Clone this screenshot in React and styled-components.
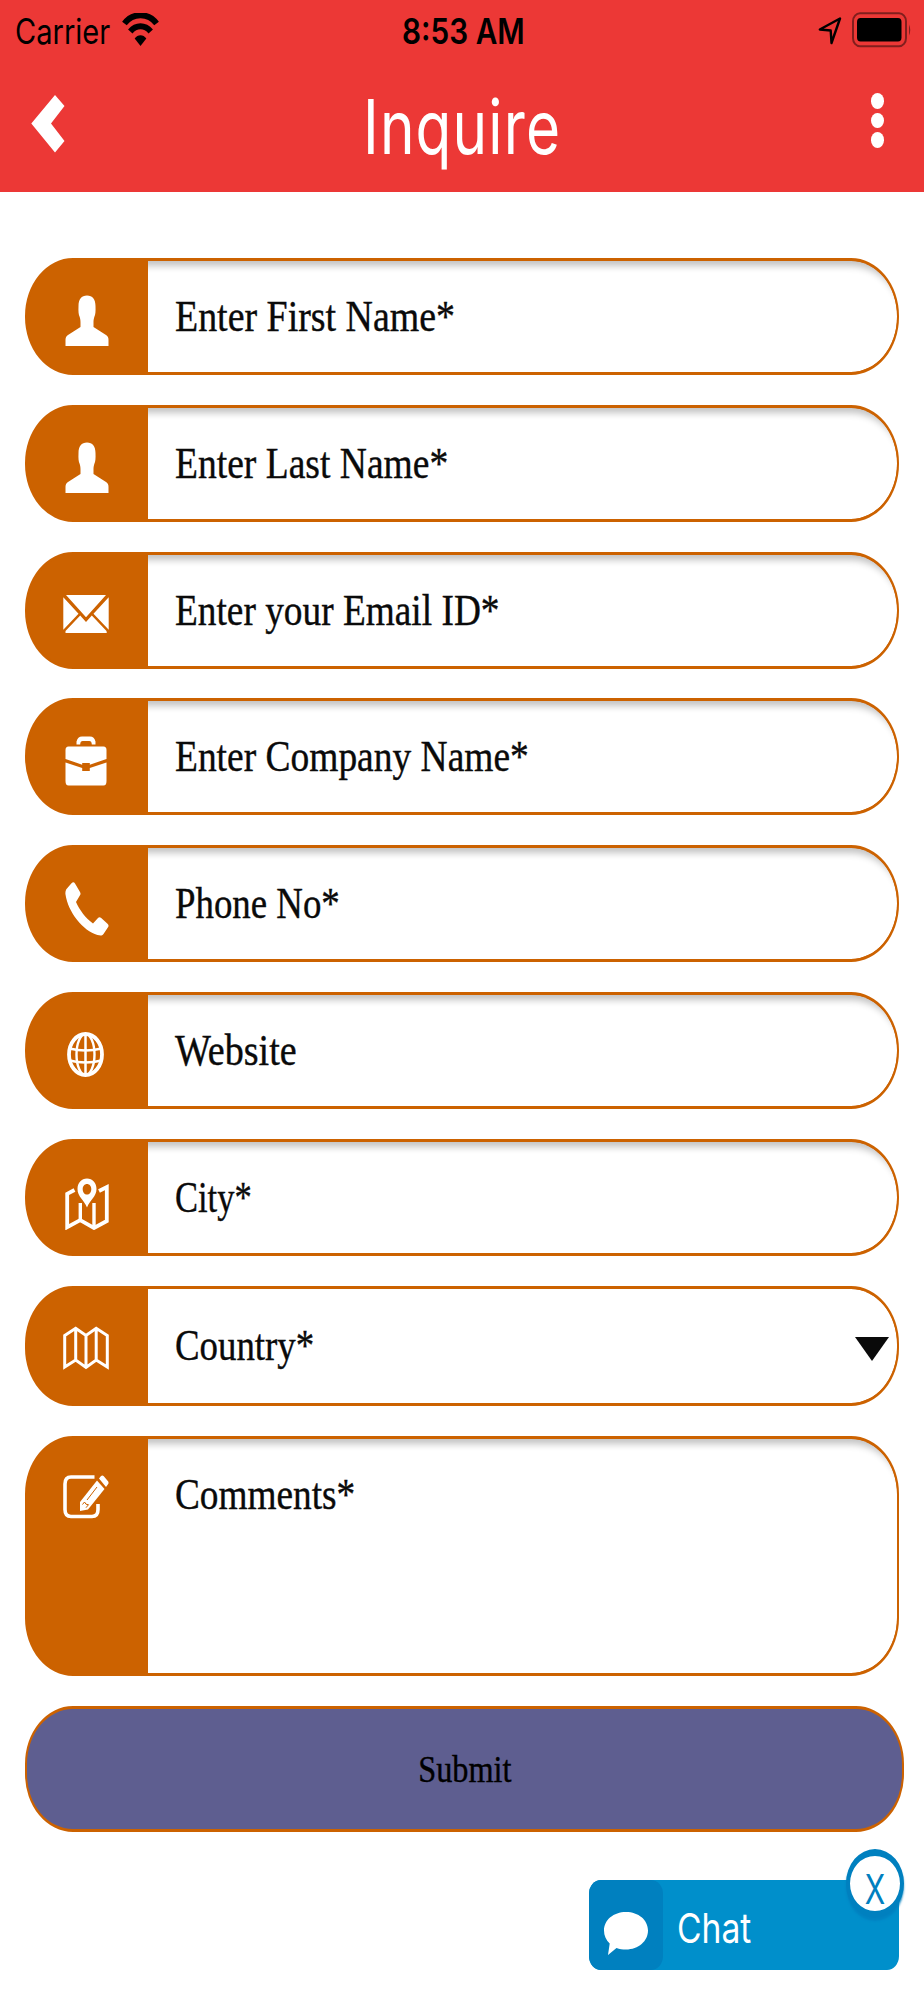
import React from 'react';
import styled, { createGlobalStyle, css } from 'styled-components';

const GlobalStyle = createGlobalStyle`
  * {
    box-sizing: border-box;
  }

  body {
    margin: 0;
    background: #fff;
  }
`;

const UserIcon = () => (
  <svg width="44" height="52" viewBox="0 0 44 52" fill="#fff">
    <path d="M22 .5c5.500 0 8.500 4 8.500 10.500.2 5.500 0 8.500-1.200 11-.6 2-.8 3.500-.8 5.500V32L41 40c2 1.500 2.500 2.500 2.500 5v6h-43v-6c0-2.500.5-3.500 2.500-5l12.500-8v-4.500c0-2-.2-3.500-.8-5.500-1.200-2.500-1.400-5.500-1.200-11C13.500 4.500 16.500.5 22 .5z" />
  </svg>
);

const MailIcon = () => (
  <svg width="46" height="38" viewBox="0 0 46 38" fill="#fff">
    <path d="M3 0h40L27.500 17.200 23 22.200l-4.500-5zM.3 2.300 15.500 18.800.3 34.800zM45.700 2.300v32.500L30.500 18.800zM17.200 20.500 23 27l5.800-6.500L43.500 36l.3 2H2.500v-2z" />
  </svg>
);

const BriefcaseIcon = () => (
  <svg width="42" height="50" viewBox="0 0 42 50" fill="#fff">
    <path d="M11.500 8.500V5.500C12.500 2.200 14 .5 17 .5h8c3 0 4.500 1.700 5.500 5v3h-3.700c0-2.500-1-3.500-2.500-3.500h-6.600c-1.500 0-2.500 1-2.500 3.500z" />
    <path d="M3.500 10.500h35c2 0 3 1.500 3 3.500v9L24.800 28.700V27h-7.600v1.700L.5 23v-9c0-2 1-3.500 3-3.500zM.5 26.500 17.200 32v3h7.600v-3l16.700-5.500V45c0 3-1 4.500-3 4.500h-35c-2 0-3-1.500-3-4.500z" />
  </svg>
);

const PhoneIcon = () => (
  <svg width="44" height="54" viewBox="0 0 44 54" fill="#fff">
    <path d="M6.500 1.200c1.500-1.500 2.500-1.200 3.500.3l5 8.500c.8 1.500.7 2.500-.3 3.800L11 20c3.500 8 9.500 16 17 21.500l5-5.500c1-1 2-1 3.200 0l6.300 5.800c1.200 1.200 1.400 2.200.5 3.500L38.500 52c-1.500 1.800-3 1.700-6 1C18 49 3 30 .5 12.500c-.3-2 0-4 .8-5.300z" />
  </svg>
);

const GlobeIcon = () => (
  <svg width="37" height="45" viewBox="0 0 37 45" fill="none" stroke="#fff">
    <ellipse cx="18.500" cy="22.500" rx="16.500" ry="20.500" strokeWidth="3.800" />
    <ellipse cx="18.500" cy="22.500" rx="9" ry="20.500" strokeWidth="2.400" />
    <path d="M18.500 2v41M2.500 16.500q16 4 32 0M2.500 28.500q16 4 32 0" strokeWidth="2.500" />
  </svg>
);

const MapPinIcon = () => (
  <svg width="44" height="52" viewBox="0 0 44 52" fill="none" stroke="#fff" strokeWidth="3.800">
    <path d="M9.500 12 2.200 15.800v33.400l13-7L29 50l12.800-7V9L34 13" />
    <path d="M15.300 25v17M29 25v24" strokeWidth="3.400" />
    <path
      d="M22 .5c5.500 0 9.500 4.500 9.500 10.500 0 7.500-6.500 11-9.500 18.500C19 22 12.500 18.500 12.500 11 12.500 5 16.500.5 22 .5zm0 5.500c-2.500 0-4.300 2.200-4.300 5.200s1.800 5.300 4.300 5.300 4.300-2.300 4.300-5.300S24.500 6 22 6z"
      fill="#fff"
      stroke="none"
      fillRule="evenodd"
    />
  </svg>
);

const MapIcon = () => (
  <svg width="46" height="44" viewBox="0 0 46 44" fill="none" stroke="#fff" strokeWidth="3">
    <path d="M1.700 9.500 12.700 2.200 23 9.500 33.200 2.200l11.100 7.300v31.500L33.200 34 23 41.500 12.700 34 1.700 41zM12.700 2.200v32M23 9.500v32M33.200 2.200v32" />
  </svg>
);

const EditIcon = () => (
  <svg width="46" height="44" viewBox="0 0 46 44">
    <path
      d="M31.500 2H8Q2 2 2 9v25.500q0 7 6 7h21q6 0 6-7V29"
      fill="none"
      stroke="#fff"
      strokeWidth="3.600"
    />
    <path d="M34 5.500 41.500 14 25 34.500l-8 1.500V27z" fill="#fff" />
    <path d="m36 3.500 1.800-2.200q1.500-1.500 3 0l4 4.700q1.500 1.700 0 3.500L43 12z" fill="#fff" />
    <path d="M24 25 34 12M19.500 29.500l2-2.500 1.500 2.200 2.500.5-2.500 3" stroke="#cc6200" strokeWidth="1" fill="none" />
  </svg>
);

const fields = [
  { label: 'Enter First Name*', Icon: UserIcon, scale: 0.852, iconTop: 37 },
  { label: 'Enter Last Name*', Icon: UserIcon, scale: 0.844, iconTop: 37 },
  { label: 'Enter your Email ID*', Icon: MailIcon, scale: 0.839, iconTop: 43, shift: 3 },
  { label: 'Enter Company Name*', Icon: BriefcaseIcon, scale: 0.842, iconTop: 38, shift: 2 },
  { label: 'Phone No*', Icon: PhoneIcon, scale: 0.828, iconTop: 37 },
  { label: 'Website', Icon: GlobeIcon, scale: 0.855, iconTop: 40, shift: 3 },
  { label: 'City*', Icon: MapPinIcon, scale: 0.775, iconTop: 39 },
  { label: 'Country*', Icon: MapIcon, scale: 0.828, iconTop: 40, shift: 3, select: true },
  { label: 'Comments*', Icon: EditIcon, scale: 0.838, iconTop: 39, shift: 3, multiline: true },
];

const App = () => {
  return (
    <Page>
      <GlobalStyle />
      <Header>
        <StatusBar>
          <Carrier>
            <StatusText $scale={0.83} $width={94}>Carrier</StatusText>
            <svg width="37" height="34" viewBox="0 0 38 34" preserveAspectRatio="none" fill="none" stroke="#000">
              <path d="M2.500 10.500C11 -.5 27 -.5 35.500 10.500" strokeWidth="6" />
              <path d="M8.500 18.500c6-7 15-7 21 0" strokeWidth="6" />
              <path d="M13 25.500c3-4.500 9-4.500 12 0L19 33z" fill="#000" stroke="none" />
            </svg>
          </Carrier>
          <StatusText $bold $scale={0.85} $width={122}>8:53 AM</StatusText>
          <StatusIcons>
            <svg width="24" height="28" viewBox="0 0 24 28" fill="none" stroke="#000" strokeWidth="2.400" strokeLinejoin="round">
              <path d="M22 1.500 13.500 26l-.8-12.500L1.800 12.500z" />
            </svg>
            <svg width="60" height="36" viewBox="0 0 60 36">
              <rect x="1" y="1.200" width="53" height="33" rx="7" ry="8" fill="none" stroke="#000" strokeOpacity=".45" strokeWidth="2" />
              <rect x="5" y="6" width="44.500" height="23.500" rx="3.500" ry="4" fill="#000" />
              <path d="M57 12.500q2.500 5.500 0 11z" fill="#000" fillOpacity=".45" />
            </svg>
          </StatusIcons>
        </StatusBar>
        <NavBar>
          <svg width="34" height="60" viewBox="0 0 34 60" fill="#fff">
            <path d="M24 1 33.500 12 20 29.500 33.500 47 24 58.500.3 29.500z" />
          </svg>
          <Title>Inquire</Title>
          <Dots>
            <Dot />
            <Dot />
            <Dot />
          </Dots>
        </NavBar>
      </Header>

      <Form>
        {fields.map(({ label, Icon, scale, iconTop, shift, select, multiline }) => (
          <Field key={label} $select={select} $multiline={multiline}>
            <IconCell $top={iconTop} $shift={shift}>
              <Icon />
            </IconCell>
            <Input $shadow={!select} $select={select}>
              <Label $scale={scale}>{label}</Label>
              {select && (
                <svg width="34" height="24" viewBox="0 0 34 24">
                  <path d="M0 0h34L17 24z" fill="#0a0a0a" />
                </svg>
              )}
            </Input>
          </Field>
        ))}
        <Submit>
          <SubmitText>Submit</SubmitText>
        </Submit>
      </Form>

      <Chat>
        <ChatIcon>
          <svg width="44" height="44" viewBox="0 0 44 44" fill="#fff">
            <path d="M22 0c12.500 0 22 8 22 18.500S34.500 37.500 22 37.500c-3.500 0-6.500-.5-9.500-1.500L4 43l1.700-11.500C2 28 0 23.500 0 18.500 0 8 9.500 0 22 0z" />
          </svg>
        </ChatIcon>
        <ChatText>Chat</ChatText>
        <Close>
          <CloseText>X</CloseText>
        </Close>
      </Chat>
    </Page>
  );
};

// Styled Components

const Page = styled.div`
  display: flex;
  flex-direction: column;
  width: 924px;
  height: 2000px;
  background: #fff;
  overflow: hidden;
`;

const Header = styled.header`
  height: 192px;
  background: #ec3836;
  font-family: Inter, 'Liberation Sans', sans-serif;
`;

const StatusBar = styled.div`
  display: grid;
  grid-template-columns: 1fr 122px 1fr;
  height: 62px;
  padding: 0 14px 0 15px;
`;

const Carrier = styled.div`
  display: flex;
  gap: 13px;

  svg {
    margin-top: 13px;
  }
`;

const StatusText = styled.span`
  width: ${({ $width }) => $width}px;
  font-size: 35px;
  line-height: 62px;
  font-weight: ${({ $bold }) => ($bold ? 600 : 400)};
  color: #000;
  white-space: nowrap;
  transform: scaleX(${({ $scale }) => $scale});
  transform-origin: left;
`;

const StatusIcons = styled.div`
  display: flex;
  justify-content: flex-end;
  gap: 10px;
  padding-top: 12px;
  margin-right: -2px;

  svg:first-child {
    margin-top: 5px;
  }
`;

const NavBar = styled.div`
  display: flex;
  justify-content: space-between;
  height: 130px;
  padding: 31px 40px 0 31px;

  > svg {
    margin-top: 1px;
  }
`;

const Title = styled.h1`
  width: 195px;
  margin: 2px 0 0 -16px;
  font-size: 75px;
  line-height: 64px;
  font-weight: 400;
  letter-spacing: 1.500px;
  color: #fff;
  white-space: nowrap;
  transform: scaleX(0.78);
  transform-origin: left;
`;

const Dots = styled.div`
  display: flex;
  flex-direction: column;
  gap: 4px;
`;

const Dot = styled.span`
  width: 13px;
  height: 15.500px;
  border-radius: 50%;
  background: #fff;
`;

const Form = styled.form`
  display: flex;
  flex-direction: column;
  gap: 29.900px;
  padding: 65.800px 25px 0;
  font-family: 'Liberation Serif', serif;
`;

const pill = css`
  border: solid #cc6200;
  border-width: 3px 2px;
  border-radius: 48px / 58px;
`;

const Field = styled.div`
  ${pill}
  display: flex;
  height: ${({ $select, $multiline }) => ($multiline ? 240.3 : $select ? 120 : 117)}px;
  background: #cc6200;
  overflow: hidden;
`;

const IconCell = styled.div`
  display: flex;
  justify-content: center;
  width: 121px;
  padding: ${({ $top }) => $top - 3}px ${({ $shift = 0 }) => $shift + 1}px 0 0;
`;

const Input = styled.div`
  display: flex;
  flex: 1;
  justify-content: space-between;
  padding: ${({ $select }) => ($select ? 30 : 29)}px 8px 0 27px;
  border-radius: 0 46px 46px 0 / 0 55px 55px 0;
  background: #fff;
  box-shadow: ${({ $shadow }) => ($shadow ? 'inset 0 14px 7px -9px rgba(0, 0, 0, 0.24)' : 'none')};

  svg {
    margin-top: 18px;
  }
`;

const Label = styled.span`
  font-size: 44.500px;
  line-height: 52px;
  height: 52px;
  color: #0a0a0a;
  white-space: nowrap;
  -webkit-text-stroke: 0.4px #0a0a0a;
  transform: scaleX(${({ $scale }) => $scale});
  transform-origin: left;
`;

const Submit = styled.button`
  ${pill}
  display: flex;
  align-items: center;
  justify-content: center;
  width: 879px;
  height: 126px;
  padding: 0;
  border-color: #cc6200;
  background: #5e5e90;
  font-family: inherit;
`;

const SubmitText = styled.span`
  font-size: 38px;
  color: #000;
  -webkit-text-stroke: 0.4px #000;
  transform: scaleX(0.85);
`;

const Chat = styled.div`
  position: relative;
  display: flex;
  align-self: flex-end;
  width: 310px;
  height: 90px;
  margin: 48px 25px 0 0;
  border-radius: 12px / 14px;
  background: #008fcb;
  font-family: Inter, 'Liberation Sans', sans-serif;
`;

const ChatIcon = styled.div`
  width: 74px;
  height: 90px;
  padding: 32px 0 0 15px;
  border-radius: 12px / 14px;
  background: #0080bf;
`;

const ChatText = styled.span`
  margin-left: 14px;
  font-size: 41px;
  line-height: 97px;
  font-weight: 400;
  color: #fff;
  transform: scaleX(0.82);
  transform-origin: left;
`;

const Close = styled.div`
  position: absolute;
  top: -31px;
  right: -5px;
  display: flex;
  align-items: center;
  justify-content: center;
  width: 58px;
  height: 69px;
  border: solid #0080bf;
  border-width: 7px 4.500px;
  border-radius: 50%;
  background: #fff;
  box-shadow: 0 3px 2px rgba(0, 128, 191, 0.8);
`;

const CloseText = styled.span`
  padding-top: 11px;
  font-size: 41px;
  line-height: 41px;
  font-weight: 400;
  color: #0080bf;
  transform: scaleX(0.73);
`;

export default App;
